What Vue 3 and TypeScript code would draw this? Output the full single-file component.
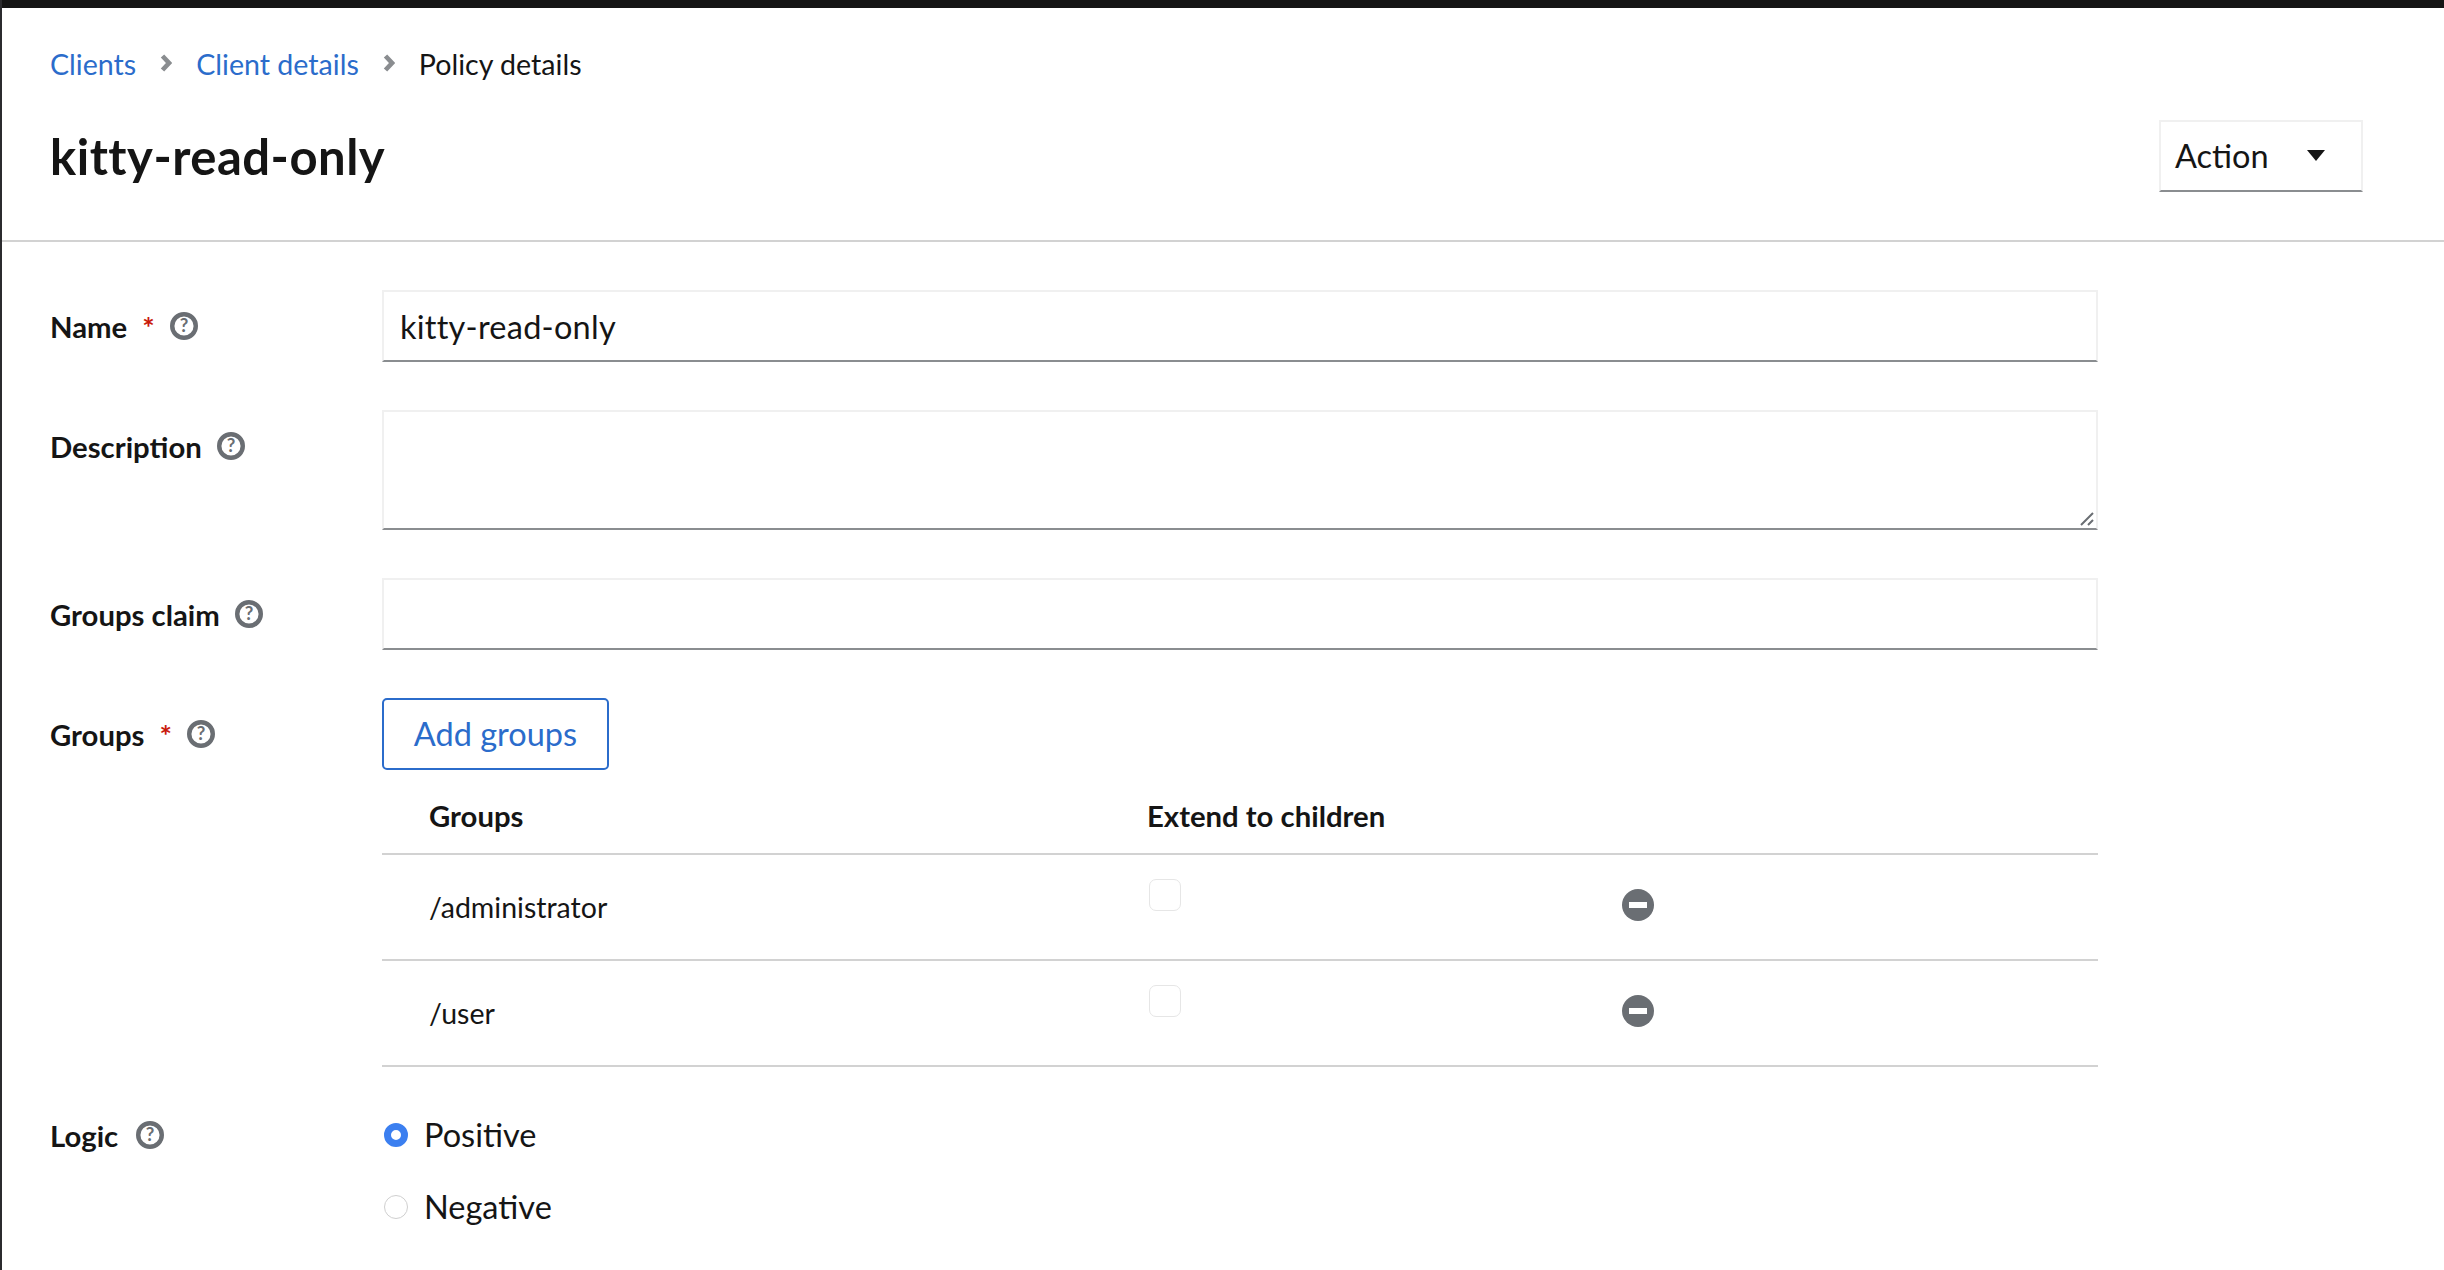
<script setup lang="ts">
interface GroupRow { path: string }
const groups: GroupRow[] = [{ path: '/administrator' }, { path: '/user' }]
</script>

<template>
  <div class="page">
    <div class="topbar"></div>
    <header class="head">
      <nav class="crumbs">
        <a class="link">Clients</a>
        <svg class="chev" viewBox="0 0 12 18"><path d="M2.500 2l6.500 7-6.500 7" fill="none" stroke="#8a8d90" stroke-width="4.600"/></svg>
        <a class="link">Client details</a>
        <svg class="chev" viewBox="0 0 12 18"><path d="M2.500 2l6.500 7-6.500 7" fill="none" stroke="#8a8d90" stroke-width="4.600"/></svg>
        <span>Policy details</span>
      </nav>
      <div class="title-row">
        <h1>kitty-read-only</h1>
        <button class="action">
          <span>Action</span>
          <svg class="caret" viewBox="0 0 18 11"><path d="M0 0h18L9 11z" fill="#151515"/></svg>
        </button>
      </div>
    </header>
    <form class="form">
      <div class="lab"><b>Name</b><i class="req">*</i>
        <svg class="help" viewBox="0 0 24 24"><circle cx="12" cy="12" r="10.100" fill="none" stroke="#6a6e73" stroke-width="3.800"/><text x="12" y="17.500" text-anchor="middle" class="q">?</text></svg>
      </div>
      <input class="field" value="kitty-read-only" />

      <div class="lab"><b>Description</b>
        <svg class="help" viewBox="0 0 24 24"><circle cx="12" cy="12" r="10.100" fill="none" stroke="#6a6e73" stroke-width="3.800"/><text x="12" y="17.500" text-anchor="middle" class="q">?</text></svg>
      </div>
      <div class="area-wrap">
        <textarea class="field area"></textarea>
        <svg class="grip" viewBox="0 0 14 14"><path d="M1 13 13 1M8 13l5-5" fill="none" stroke="#6a6e73" stroke-width="2"/></svg>
      </div>

      <div class="lab"><b>Groups claim</b>
        <svg class="help" viewBox="0 0 24 24"><circle cx="12" cy="12" r="10.100" fill="none" stroke="#6a6e73" stroke-width="3.800"/><text x="12" y="17.500" text-anchor="middle" class="q">?</text></svg>
      </div>
      <input class="field" />

      <div class="lab"><b>Groups</b><i class="req">*</i>
        <svg class="help" viewBox="0 0 24 24"><circle cx="12" cy="12" r="10.100" fill="none" stroke="#6a6e73" stroke-width="3.800"/><text x="12" y="17.500" text-anchor="middle" class="q">?</text></svg>
      </div>
      <div class="groups">
        <button type="button" class="add">Add groups</button>
        <div class="thead"><b>Groups</b><b>Extend to children</b></div>
        <div v-for="g in groups" :key="g.path" class="trow">
          <span>{{ g.path }}</span>
          <span class="check"></span>
          <svg class="minus" viewBox="0 0 32 32"><circle cx="16" cy="16" r="16" fill="#6a6e73"/><rect x="7" y="13" width="18" height="6" fill="#fff"/></svg>
        </div>
      </div>

      <div class="lab logic"><b>Logic</b>
        <svg class="help" viewBox="0 0 24 24"><circle cx="12" cy="12" r="10.100" fill="none" stroke="#6a6e73" stroke-width="3.800"/><text x="12" y="17.500" text-anchor="middle" class="q">?</text></svg>
      </div>
      <div class="radios">
        <label class="radio"><span class="dot on"></span><span class="rt">Positive</span></label>
        <label class="radio"><span class="dot"></span><span class="rt">Negative</span></label>
      </div>
    </form>
  </div>
</template>

<style>
html, body { background: #fff; overflow: hidden; }
</style>

<style scoped>
.page {
  height: 1270px;
  width: 2444px;
  box-sizing: border-box;
  border-left: 2px solid #2b2b2e;
  font-family: Lato, "Liberation Sans", sans-serif;
  font-size: 28.500px;
  color: #151515;
  overflow: hidden;
}
.topbar { height: 8px; margin-left: -2px; background: #151515; }
.head { height: 234px; box-sizing: border-box; padding: 36px 0 0 48px; border-bottom: 2px solid #d2d2d2; }
.crumbs { display: flex; align-items: center; height: 40px; font-size: 28.600px; }
.link { color: #2b6ccb; }
.chev { width: 12px; height: 18px; margin: 0 24px 3px 24px; }
.title-row { display: flex; align-items: center; justify-content: space-between; padding-right: 81px; margin-top: 36px; }
h1 { margin: 0; font-size: 49px; font-weight: 700; line-height: 72px; letter-spacing: 0.500px; }
.action {
  display: flex; align-items: center; justify-content: space-between;
  width: 204px; height: 72px; box-sizing: border-box; padding: 0 36px 2px 14px;
  background: #fff; border: 2px solid #f0f0f0; border-bottom-color: #8a8d90;
  font: inherit; font-size: 32.500px; color: #151515;
}
.caret { width: 18px; height: 11px; }
.form {
  display: grid;
  grid-template-columns: 332px 1716px;
  padding: 48px 0 0 48px;
  row-gap: 48px;
}
.lab { display: flex; align-items: center; height: 72px; font-size: 29.300px; }
.lab b { font-weight: 700; }
.req { color: #c9190b; font-style: normal; margin-left: 15px; font-weight: 700; }
.help { width: 28px; height: 28px; margin-left: 15px; }
.logic .help { margin-left: 18px; }
.q { font-size: 16px; font-weight: 700; fill: #6a6e73; font-family: Lato, sans-serif; }
.field {
  display: block; width: 1716px; height: 72px; box-sizing: border-box;
  padding: 0 16px; margin: 0;
  border: 2px solid #f0f0f0; border-bottom-color: #8a8d90; border-radius: 0;
  font: inherit; font-size: 32.500px; letter-spacing: 0.250px; color: #151515; outline: none; background: #fff;
}
.area-wrap { position: relative; width: 1716px; height: 120px; }
.area { height: 120px; resize: none; }
.grip { position: absolute; right: 4px; bottom: 4px; width: 14px; height: 14px; }
.groups { display: flex; flex-direction: column; }
.add {
  width: 227px; height: 72px; box-sizing: border-box; background: #fff;
  border: 2px solid #2b6ccb; border-radius: 5px; color: #2b6ccb;
  font: inherit; font-size: 32.500px; padding: 0 0 2px;
}
.thead, .trow {
  display: grid; grid-template-columns: 718px 475px 1fr;
  padding-left: 47px; border-bottom: 2px solid #d2d2d2;
}
.thead { height: 76px; padding-top: 7px; align-items: center; font-size: 29.300px; grid-template-columns: 718px 1fr; }
.thead b { font-weight: 700; }
.trow { height: 104px; align-items: center; font-size: 28.500px; }
.check {
  width: 32px; height: 32px; margin-top: -25px; margin-left: 2px; box-sizing: border-box;
  border: 1.500px solid #e6e6e6; border-radius: 7px; background: #fff;
}
.minus { width: 32px; height: 32px; margin-top: -5px; }
.logic { margin-top: -16px; }
.radios { display: flex; flex-direction: column; gap: 32px; margin-top: -16px; padding-top: 16px; }
.radio { display: flex; align-items: center; height: 40px; font-size: 32.500px; }
.rt { padding-bottom: 2px; }
.dot {
  width: 24px; height: 24px; margin: 0 16px 0 2px; border-radius: 50%; box-sizing: border-box;
  border: 1.500px solid #cfcfcf; background: #fff;
}
.dot.on { border: 7px solid #3b7ff0; }
</style>
